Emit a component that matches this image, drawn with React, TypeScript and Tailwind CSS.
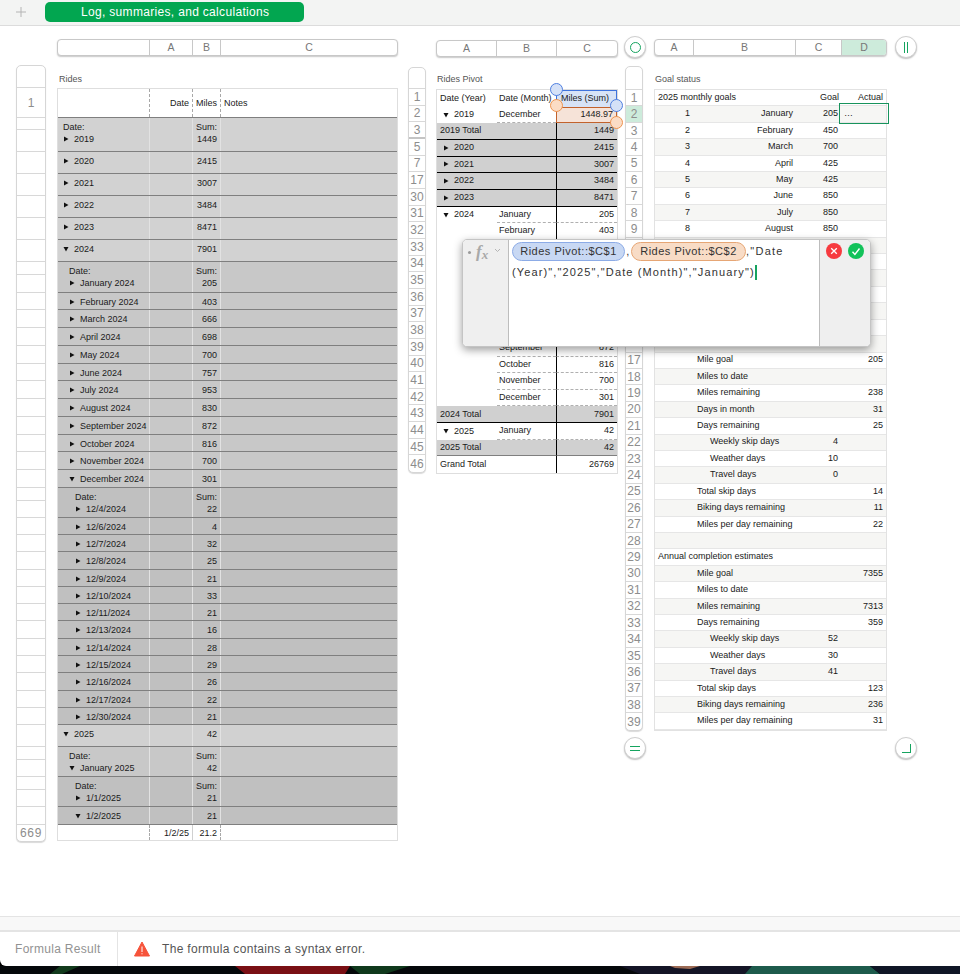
import React from "react";

const Arrow = ({ down }: { down?: boolean }) => (
  <svg width="6" height="6" viewBox="0 0 6 6" className="shrink-0">
    {down ? <polygon points="0.5,1 5.5,1 3,5.5" fill="#111" /> : <polygon points="1,0.5 5.5,3 1,5.5" fill="#111" />}
  </svg>
);

type L = { label: string; val: string; lv: number; h: number; down?: boolean; two?: boolean };
const leftRows: L[] = [
  { label: "2019", val: "1449", lv: 1, h: 34, two: true },
  { label: "2020", val: "2415", lv: 1, h: 22 },
  { label: "2021", val: "3007", lv: 1, h: 22 },
  { label: "2022", val: "3484", lv: 1, h: 22 },
  { label: "2023", val: "8471", lv: 1, h: 22 },
  { label: "2024", val: "7901", lv: 1, h: 22, down: true },
  { label: "January 2024", val: "205", lv: 2, h: 31, two: true },
  { label: "February 2024", val: "403", lv: 2, h: 17 },
  { label: "March 2024", val: "666", lv: 2, h: 18 },
  { label: "April 2024", val: "698", lv: 2, h: 18 },
  { label: "May 2024", val: "700", lv: 2, h: 18 },
  { label: "June 2024", val: "757", lv: 2, h: 17 },
  { label: "July 2024", val: "953", lv: 2, h: 18 },
  { label: "August 2024", val: "830", lv: 2, h: 18 },
  { label: "September 2024", val: "872", lv: 2, h: 18 },
  { label: "October 2024", val: "816", lv: 2, h: 17 },
  { label: "November 2024", val: "700", lv: 2, h: 18 },
  { label: "December 2024", val: "301", lv: 2, h: 18, down: true },
  { label: "12/4/2024", val: "22", lv: 3, h: 30, two: true },
  { label: "12/6/2024", val: "4", lv: 3, h: 17 },
  { label: "12/7/2024", val: "32", lv: 3, h: 17 },
  { label: "12/8/2024", val: "25", lv: 3, h: 18 },
  { label: "12/9/2024", val: "21", lv: 3, h: 17 },
  { label: "12/10/2024", val: "33", lv: 3, h: 17 },
  { label: "12/11/2024", val: "21", lv: 3, h: 17 },
  { label: "12/13/2024", val: "16", lv: 3, h: 18 },
  { label: "12/14/2024", val: "28", lv: 3, h: 17 },
  { label: "12/15/2024", val: "29", lv: 3, h: 17 },
  { label: "12/16/2024", val: "26", lv: 3, h: 18 },
  { label: "12/17/2024", val: "22", lv: 3, h: 17 },
  { label: "12/30/2024", val: "21", lv: 3, h: 17 },
  { label: "2025", val: "42", lv: 1, h: 22, down: true },
  { label: "January 2025", val: "42", lv: 2, h: 30, two: true, down: true },
  { label: "1/1/2025", val: "21", lv: 3, h: 30, two: true },
  { label: "1/2/2025", val: "21", lv: 3, h: 18, down: true },
];

const leftHeaderLines = [22, 30, 12, 22, 22, 22, 22, 22, 22, 13, 18, 17, 18, 18, 18, 17, 18, 18, 18, 17, 18, 18, 13, 17, 17, 17, 18, 17, 17, 17, 18, 17, 17, 18, 17, 17, 22, 13, 17, 13, 17, 18, 16];

const numFont = "text-[12px] text-[#8d8d8d]";

function LeftRowHeader() {
  return (
    <div className="mt-[39px] w-[30px] h-fit border border-[#d6d6d6] rounded-t-[5px] rounded-b-[5px] shadow-[0_1px_1px_rgba(0,0,0,0.15)] bg-white">
      {leftHeaderLines.map((h, i) => {
        const last = i === leftHeaderLines.length - 1;
        return (
          <div
            key={i}
            style={{ height: h }}
            className={`flex items-center justify-center ${numFont} ${last ? "tracking-[0.6px]" : "border-b border-[#d8d8d8]"}`}
          >
            {i === 1 ? "1" : last ? "669" : ""}
          </div>
        );
      })}
    </div>
  );
}

function ColHeader({ cols, active }: { cols: { w: string; t: string }[]; active?: string }) {
  return (
    <div className="flex h-[17px] border border-[#c8c8c8] rounded-[4px] overflow-hidden bg-white shadow-[0_1px_1.5px_rgba(0,0,0,0.22)]">
      {cols.map((c, i) => (
        <div
          key={i}
          className={`${c.w} flex items-center justify-center text-[10.5px] text-[#777] ${i < cols.length - 1 ? "border-r border-[#c8c8c8]" : ""} ${active === c.t ? "bg-[#cdebdb]" : ""}`}
        >
          {c.t}
        </div>
      ))}
    </div>
  );
}

const bgFor = (r: L) =>
  r.lv === 1 ? (r.label === "2025" ? "bg-[#d1d1d1]" : "bg-[#d2d2d2]") : r.lv === 2 ? "bg-[#c8c8c8]" : "bg-[#c0c0c0]";
const indentFor = (lv: number) => (lv === 1 ? "pl-[5px]" : lv === 2 ? "pl-[11px]" : "pl-[17px]");

function LeftTable() {
  return (
    <div className="w-[341px] border border-[#dedede] bg-white text-[9px] leading-[12px] text-[#1a1a1a]">
      <div className="grid grid-cols-[92px_43px_28px_1fr] h-[29px] border-b border-[#7f7f7f]">
        <div className="border-r border-dashed border-[#a8a8a8]" />
        <div className="border-r border-dashed border-[#a8a8a8] text-right pr-[3px] pt-[8px]">Date</div>
        <div className="border-r border-dashed border-[#a8a8a8] text-center pt-[8px]">Miles</div>
        <div className="pl-[3px] pt-[8px]">Notes</div>
      </div>
      {leftRows.map((r, i) => (
        <div
          key={i}
          style={{ height: r.h }}
          className={`grid grid-cols-[92px_43px_28px_1fr] border-b border-[#7f7f7f] ${bgFor(r)}`}
        >
          <div className={`border-r border-[#e2e2e2] pt-[3px] ${indentFor(r.lv)} whitespace-nowrap`}>
            {r.two && <div>Date:</div>}
            <div className="flex items-center gap-[5px]">
              <Arrow down={r.down} />
              <span>{r.label}</span>
            </div>
          </div>
          <div className="border-r border-[#e2e2e2]" />
          <div className="border-r border-[#e2e2e2] pt-[3px] pr-[3px] text-right">
            {r.two && <div>Sum:</div>}
            <div>{r.val}</div>
          </div>
          <div />
        </div>
      ))}
      <div className="grid grid-cols-[92px_43px_28px_1fr] h-[15px]">
        <div className="border-r border-dashed border-[#a8a8a8]" />
        <div className="border-r border-[#d0d0d0] text-right pr-[3px] pt-[2px]">1/2/25</div>
        <div className="border-r border-dashed border-[#a8a8a8] text-right pr-[3px] pt-[2px]">21.2</div>
        <div />
      </div>
    </div>
  );
}

type M = { n: string; a?: React.ReactNode; b?: string; c?: string; kind?: "gray" | "plain" };
const yr = (t: string, down?: boolean) => (
  <span className="flex items-center gap-[5px] pl-[3px]">
    <Arrow down={down} />
    {t}
  </span>
);
const midRows: M[] = [
  { n: "2", a: yr("2019", true), b: "December", c: "1448.97" },
  { n: "3", a: "2019 Total", c: "1449", kind: "gray" },
  { n: "5", a: yr("2020"), c: "2415", kind: "gray" },
  { n: "7", a: yr("2021"), c: "3007", kind: "gray" },
  { n: "17", a: yr("2022"), c: "3484", kind: "gray" },
  { n: "30", a: yr("2023"), c: "8471", kind: "gray" },
  { n: "31", a: yr("2024", true), b: "January", c: "205" },
  { n: "32", b: "February", c: "403" },
  { n: "33" },
  { n: "34" },
  { n: "35" },
  { n: "36" },
  { n: "37" },
  { n: "38" },
  { n: "39", b: "September", c: "872" },
  { n: "40", b: "October", c: "816" },
  { n: "41", b: "November", c: "700" },
  { n: "42", b: "December", c: "301" },
  { n: "43", a: "2024 Total", c: "7901", kind: "gray" },
  { n: "44", a: yr("2025", true), b: "January", c: "42" },
  { n: "45", a: "2025 Total", c: "42", kind: "gray" },
  { n: "46", a: "Grand Total", c: "26769", kind: "plain" },
];
const MID_H = 16.66;

function MidRowHeader() {
  return (
    <div className="mt-[41px] w-[18px] h-fit border border-[#d6d6d6] rounded-[5px] bg-white shadow-[0_1px_1px_rgba(0,0,0,0.15)]">
      <div className="h-[21px] border-b border-[#d8d8d8]" />
      {["1", ...midRows.map((r) => r.n)].map((n, i) => (
        <div
          key={n}
          style={{ height: MID_H }}
          className={`flex items-center justify-center ${numFont} ${i === 22 ? "" : n === "3" ? "border-b-2 border-[#c4c4c4]" : "border-b border-[#d8d8d8]"}`}
        >
          {n}
        </div>
      ))}
    </div>
  );
}

const Handle = ({ color, pos }: { color: "blue" | "orange"; pos: string }) => (
  <div
    className={`absolute w-[13px] h-[13px] rounded-full border ${pos} ${color === "blue" ? "bg-[#d5e1f7] border-[#4f7fe0]" : "bg-[#fbdcc5] border-[#ee9450]"}`}
  />
);

function MidTable() {
  return (
    <div className="relative w-[182px] border border-[#dedede] bg-white text-[9px] text-[#1a1a1a] whitespace-nowrap">
      <div className="grid grid-cols-[60px_59px_61px]" style={{ height: MID_H }}>
        <div className="flex items-center pl-[3px]">Date (Year)</div>
        <div className="flex items-center pl-[2px]">Date (Month)</div>
        <div className="flex items-center pl-[4px] bg-[#d7e3f6] border border-[#3f73dc] border-b-0">Miles (Sum)</div>
      </div>
      {midRows.map((r) => {
        const gray = r.kind === "gray";
        const line =
          r.n === "45"
            ? "border-b border-[#7f7f7f]"
            : gray
              ? "border-b border-black"
              : r.kind === "plain"
                ? ""
                : "border-b border-dashed border-[#b0b0b0]";
        return (
          <div key={r.n} className={`grid grid-cols-[60px_59px_61px] ${gray ? "bg-[#d0d0d0]" : ""}`} style={{ height: MID_H }}>
            <div className={`flex items-center pl-[3px] ${gray ? line : ""}`}>{r.a}</div>
            <div className={`flex items-center pl-[2px] ${line}`}>{r.b}</div>
            <div
              className={`flex items-center justify-end pr-[3px] ${
                r.n === "2" ? "bg-[#f6e3d8] border border-[#c2622c]" : `${line} border-l border-l-black [border-left-style:solid]`
              }`}
            >
              {r.c}
            </div>
          </div>
        );
      })}
      <Handle color="blue" pos="left-[113px] top-[-7px]" />
      <Handle color="orange" pos="left-[113px] top-[9px]" />
      <Handle color="blue" pos="left-[173px] top-[9px]" />
      <Handle color="orange" pos="left-[173px] top-[26px]" />
    </div>
  );
}

type R = { kind?: "head" | "sub" | "sub2" | "m" | "blank"; a?: string; b?: string; c?: string; d?: string };
const rightRows: R[] = [
  { kind: "m", a: "1", b: "January", c: "205" },
  { kind: "m", a: "2", b: "February", c: "450" },
  { kind: "m", a: "3", b: "March", c: "700" },
  { kind: "m", a: "4", b: "April", c: "425" },
  { kind: "m", a: "5", b: "May", c: "425" },
  { kind: "m", a: "6", b: "June", c: "850" },
  { kind: "m", a: "7", b: "July", c: "850" },
  { kind: "m", a: "8", b: "August", c: "850" },
  { kind: "blank" },
  { kind: "blank" },
  { kind: "blank" },
  { kind: "blank" },
  { kind: "blank" },
  { kind: "blank" },
  { kind: "blank" },
  { kind: "sub", b: "Mile goal", d: "205" },
  { kind: "sub", b: "Miles to date" },
  { kind: "sub", b: "Miles remaining", d: "238" },
  { kind: "sub", b: "Days in month", d: "31" },
  { kind: "sub", b: "Days remaining", d: "25" },
  { kind: "sub2", b: "Weekly skip days", c: "4" },
  { kind: "sub2", b: "Weather days", c: "10" },
  { kind: "sub2", b: "Travel days", c: "0" },
  { kind: "sub", b: "Total skip days", d: "14" },
  { kind: "sub", b: "Biking days remaining", d: "11" },
  { kind: "sub", b: "Miles per day remaining", d: "22" },
  { kind: "blank" },
  { kind: "head", a: "Annual completion estimates" },
  { kind: "sub", b: "Mile goal", d: "7355" },
  { kind: "sub", b: "Miles to date" },
  { kind: "sub", b: "Miles remaining", d: "7313" },
  { kind: "sub", b: "Days remaining", d: "359" },
  { kind: "sub2", b: "Weekly skip days", c: "52" },
  { kind: "sub2", b: "Weather days", c: "30" },
  { kind: "sub2", b: "Travel days", c: "41" },
  { kind: "sub", b: "Total skip days", d: "123" },
  { kind: "sub", b: "Biking days remaining", d: "236" },
  { kind: "sub", b: "Miles per day remaining", d: "31" },
];
const RIGHT_H = 16.42;

function RightRowHeader() {
  return (
    <div className="mt-[40px] w-[18px] h-fit border border-[#d6d6d6] rounded-[5px] bg-white shadow-[0_1px_1px_rgba(0,0,0,0.15)]">
      <div className="h-[23px] border-b border-[#d8d8d8]" />
      {Array.from({ length: 39 }, (_, i) => i + 1).map((n) => (
        <div
          key={n}
          style={{ height: RIGHT_H }}
          className={`flex items-center justify-center ${numFont} ${n === 39 ? "" : "border-b border-[#d8d8d8]"} ${n === 2 ? "bg-[#cdebdb]" : ""}`}
        >
          {n >= 10 && n <= 16 ? "" : n}
        </div>
      ))}
    </div>
  );
}

function RightTable() {
  return (
    <div className="relative w-[233px] border border-[#e2e2e2] bg-white text-[9px] text-[#1a1a1a] whitespace-nowrap">
      <div className="flex items-center justify-between pl-[3px] border-b border-[#e6e6e6]" style={{ height: RIGHT_H }}>
        <span>2025 monthly goals</span>
        <span className="flex">
          <span className="w-[46px] text-right">Goal</span>
          <span className="w-[47px] text-right pr-[3px]">Actual</span>
        </span>
      </div>
      {rightRows.map((r, i) => {
        const alt = i % 2 === 0;
        const base = `grid grid-cols-[38px_102px_46px_1fr] items-center border-b border-[#e6e6e6] ${alt ? "bg-[#f6f6f4]" : "bg-white"}`;
        if (r.kind === "head")
          return (
            <div key={i} className={`flex items-center pl-[3px] border-b border-[#e6e6e6] ${alt ? "bg-[#f6f6f4]" : ""}`} style={{ height: RIGHT_H }}>
              {r.a}
            </div>
          );
        return (
          <div key={i} className={base} style={{ height: RIGHT_H }}>
            <div className="text-right pr-[3px]">{r.a}</div>
            <div className={r.kind === "m" ? "text-right pr-[2px]" : r.kind === "sub2" ? "pl-[17px]" : "pl-[4px]"}>{r.b}</div>
            <div className="text-right pr-[3px]">{r.c}</div>
            <div className="text-right pr-[3px]">{r.d}</div>
          </div>
        );
      })}
      <div className="absolute left-[184px] top-[13px] w-[50px] h-[21px] border border-[#17935c] flex items-center pl-[4px]">…</div>
    </div>
  );
}

const Round = ({ pos, children }: { pos: string; children: React.ReactNode }) => (
  <div className={`absolute ${pos} w-[22px] h-[22px] rounded-full bg-white border border-[#cfcfcf] shadow-[0_1px_1.5px_rgba(0,0,0,0.25)] flex items-center justify-center`}>
    {children}
  </div>
);

const pillText = "text-[11px] tracking-[0.5px] text-[#333]";

function FormulaEditor() {
  return (
    <div className="absolute left-[462px] top-[239px] w-[409px] h-[108px] flex rounded-[5px] overflow-hidden border border-[#c4c4c4] bg-white shadow-[0_3px_9px_rgba(0,0,0,0.38)]">
      <div className="w-[46px] bg-[#efefef] border-r border-[#bdbdbd] flex items-start pt-[3px] pl-[5px] gap-[5px] text-[#a9a9a9]">
        <span className="w-[3px] h-[3px] rounded-full bg-[#9a9a9a] mt-[8px] shrink-0" />
        <span className="[font-family:'Liberation_Serif',serif] italic font-bold text-[17px] leading-[18px] whitespace-nowrap">
          f<span className="text-[13px] relative top-[2px]">x</span>
        </span>
        <svg width="7" height="5" viewBox="0 0 7 5" className="mt-[5px] ml-[1px] shrink-0">
          <path d="M1 1l2.5 2.5L6 1" stroke="#b5b5b5" fill="none" strokeWidth="1" />
        </svg>
      </div>
      <div className={`flex-1 pl-[3px] pt-[1px] leading-[21px] ${pillText}`}>
        <div className="flex items-center h-[21px] whitespace-nowrap">
          <span className="w-[113px] h-[19px] rounded-full bg-[#c8d8f3] border border-[#8cabe6] flex items-center justify-center">Rides Pivot::$C$1</span>
          <span className="w-[6px] text-center">,</span>
          <span className="w-[115px] h-[19px] rounded-full bg-[#f8dcc6] border border-[#e6a675] flex items-center justify-center">Rides Pivot::$C$2</span>
          <span className="tracking-[1.25px]">,"Date</span>
        </div>
        <div className="flex items-center h-[21px] whitespace-nowrap tracking-[1.13px]">
          <span>(Year)","2025","Date (Month)","January")</span>
          <span className="inline-block w-[2px] h-[15px] bg-[#16a35f]" />
        </div>
      </div>
      <div className="w-[51px] bg-[#efefef] border-l border-[#bdbdbd] flex items-start gap-[6px] pt-[3px] pl-[6px]">
        <div className="w-[16px] h-[16px] rounded-full bg-[#f73a3f] flex items-center justify-center">
          <svg width="8" height="8" viewBox="0 0 8 8"><path d="M1.2 1.2l5.6 5.6M6.8 1.2l-5.6 5.6" stroke="#fff" strokeWidth="1.3" /></svg>
        </div>
        <div className="w-[16px] h-[16px] rounded-full bg-[#12c25a] flex items-center justify-center">
          <svg width="10" height="9" viewBox="0 0 10 9"><path d="M1.5 4.8l2.4 2.6L8.5 1.5" stroke="#fff" strokeWidth="1.4" fill="none" /></svg>
        </div>
      </div>
    </div>
  );
}

export default function App() {
  return (
    <div className="relative w-[960px] h-[974px] overflow-hidden bg-black flex flex-col [font-family:'Liberation_Sans',Arial,sans-serif]">
      <div className="h-[26px] bg-[#f3f4f3] border-b border-[#dcdcdc] flex items-start pt-[2px] pl-[15px]">
        <svg width="12" height="12" viewBox="0 0 12 12" className="mt-[4px]">
          <path d="M6 1v10M1 6h10" stroke="#b4b4b4" strokeWidth="1" />
        </svg>
        <div className="ml-[18px] w-[259px] h-[20px] rounded-[5px] bg-[#02a650] text-white text-[12px] tracking-[0.32px] flex items-center pl-[36px]">
          Log, summaries, and calculations
        </div>
      </div>

      <div className="h-[890px] bg-white flex pl-[16px] items-start text-[#333]">
        <LeftRowHeader />
        <div className="ml-[11px] mt-[13px]">
          <ColHeader
            cols={[
              { w: "w-[92px]", t: "" },
              { w: "w-[43px]", t: "A" },
              { w: "w-[28px]", t: "B" },
              { w: "flex-1", t: "C" },
            ]}
          />
          <div className="h-[32px] pt-[17px] pl-[2px] text-[9px] leading-[12px] text-[#555]">Rides</div>
          <LeftTable />
        </div>

        <div className="ml-[10px]"><MidRowHeader /></div>
        <div className="ml-[10px] mt-[14px] w-[182px]">
          <ColHeader
            cols={[
              { w: "w-[60px]", t: "A" },
              { w: "w-[60px]", t: "B" },
              { w: "flex-1", t: "C" },
            ]}
          />
          <div className="h-[32px] pt-[16px] pl-[1px] text-[9px] leading-[12px] text-[#555]">Rides Pivot</div>
          <MidTable />
        </div>

        <div className="ml-[7px]"><RightRowHeader /></div>
        <div className="ml-[11px] mt-[13px] w-[233px]">
          <ColHeader
            cols={[
              { w: "w-[39px]", t: "A" },
              { w: "w-[102px]", t: "B" },
              { w: "w-[46px]", t: "C" },
              { w: "flex-1", t: "D" },
            ]}
            active="D"
          />
          <div className="h-[33px] pt-[17px] pl-[1px] text-[9px] leading-[12px] text-[#555]">Goal status</div>
          <RightTable />
        </div>
      </div>

      <div className="h-[14px] bg-[#f8f8f8] border-t border-[#e4e4e4]" />
      <div className="h-[36px] bg-white border-t-2 border-[#e4e4e4] rounded-bl-[6px] flex items-center">
        <div className="w-[118px] h-full pl-[15px] border-r border-[#e4e4e4] flex items-center text-[12px] tracking-[0.3px] text-[#929292]">Formula Result</div>
        <svg width="16" height="16" viewBox="0 0 16 16" className="ml-[16px]">
          <path d="M8 1L15.5 15H0.5Z" fill="#f6533a" stroke="#f6533a" strokeLinejoin="round" />
          <path d="M8 5.5v5.5M8 12.3v1" stroke="#fff" strokeWidth="1" />
        </svg>
        <span className="ml-[12px] text-[12px] tracking-[0.33px] text-[#555]">The formula contains a syntax error.</span>
      </div>
      <svg width="960" height="8" viewBox="0 0 960 8" className="block">
        <rect width="960" height="8" fill="#05080a" />
        <polygon points="60,0 80,0 62,8 50,8" fill="#123a1c" />
        <polygon points="235,0 350,0 345,8 245,8" fill="#7a0f14" />
        <polygon points="350,0 410,0 385,8 360,8" fill="#10391c" />
        <polygon points="620,0 760,0 760,8 640,8" fill="#141526" />
        <polygon points="670,0 700,0 690,3 675,2" fill="#9c6b55" />
        <polygon points="752,0 870,0 880,8 745,8" fill="#1d5b4c" />
        <polygon points="870,0 960,0 960,8 880,8" fill="#0f1626" />
      </svg>

      <FormulaEditor />

      <Round pos="left-[624px] top-[36px]">
        <div className="w-[11px] h-[11px] rounded-full border-[1.5px] border-[#15a45f]" />
      </Round>
      <Round pos="left-[895px] top-[36px]">
        <div className="flex gap-[2px]">
          <div className="w-[1px] h-[11px] bg-[#15a45f]" />
          <div className="w-[1px] h-[11px] bg-[#15a45f]" />
        </div>
      </Round>
      <Round pos="left-[624px] top-[737px]">
        <div className="w-[10px] h-[5px] border-y border-[#15a45f]" />
      </Round>
      <Round pos="left-[895px] top-[737px]">
        <div className="w-[9px] h-[9px] border-r border-b border-[#15a45f]" />
      </Round>
    </div>
  );
}
